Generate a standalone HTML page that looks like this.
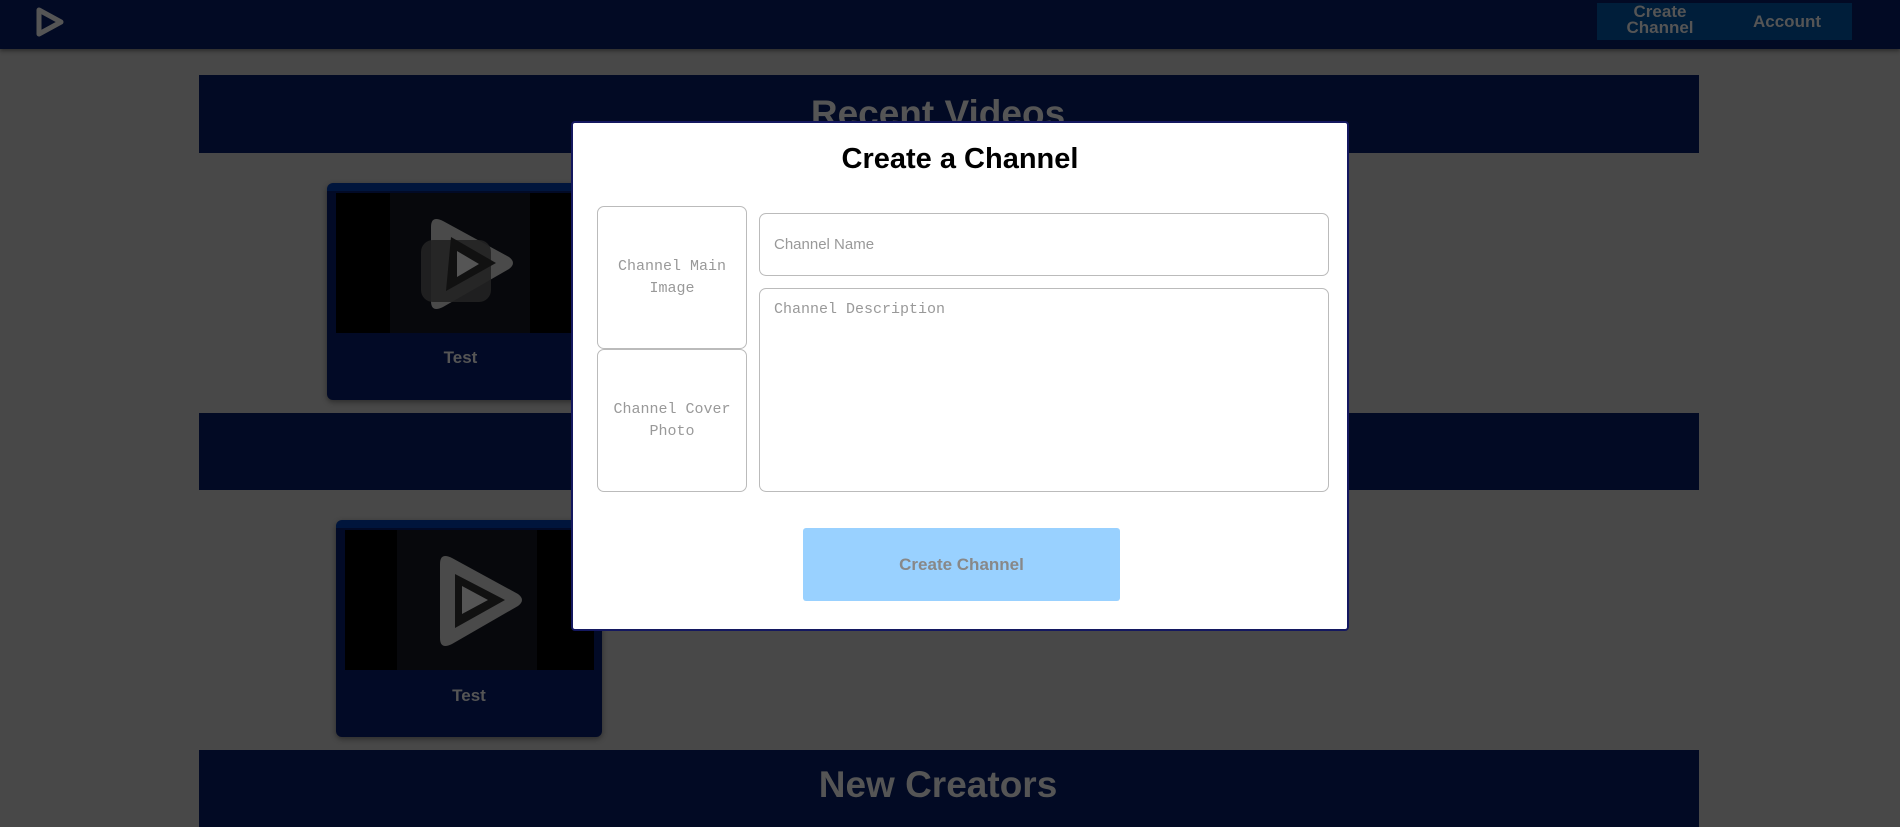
<!DOCTYPE html>
<html><head><meta charset="utf-8"><style>
*{margin:0;padding:0;box-sizing:border-box}
body{width:1900px;height:827px;overflow:hidden;background:#484848;font-family:"Liberation Sans",sans-serif;position:relative}
.abs{position:absolute}
.nav{left:0;top:0;width:1900px;height:49px;background:#020a24;box-shadow:0 2px 4px rgba(0,0,0,.4)}
.navbtn{left:1597px;top:3px;width:255px;height:37px;background:#001e3a;color:#555;font-weight:bold;font-size:17px}
.banner{left:199px;width:1500px;background:#020a24;color:#555;font-weight:bold;font-size:37px;text-align:center;padding-right:22px}
.card{background:#020a26;border-radius:6px;border-top:8px solid #00153c;box-shadow:0 2px 6px rgba(0,0,0,.4)}
.img{background:#000}
.mid{background:#07080c}
.test{color:#555;font-weight:bold;font-size:17px;text-align:center;width:100%}
.modal{left:571px;top:121px;width:778px;height:510px;background:#fff;border:2px solid #141860;border-radius:4px}
.box{border:1px solid #bbb;border-radius:7px;background:#fff;color:#999;font-family:"Liberation Mono",monospace;font-size:15px;line-height:22px;text-align:center;display:flex;align-items:center;justify-content:center}
.ph{color:#999;font-family:"Liberation Mono",monospace;font-size:15px}
</style></head><body>
<div class="abs nav"></div>
<svg class="abs" style="left:34px;top:6px" width="32" height="32" viewBox="0 0 32 32"><path d="M5 4 L27 16 L5 28 Z" fill="none" stroke="#555" stroke-width="5" stroke-linejoin="round"/></svg>
<div class="abs navbtn"><div class="abs" style="left:28px;top:1px;width:70px;text-align:center;line-height:16px">Create<br>Channel</div><div class="abs" style="left:156px;top:9px">Account</div></div>

<div class="abs banner" style="top:75px;height:78px;line-height:70px;padding-top:4px">Recent Videos</div>
<div class="abs banner" style="top:413px;height:77px"></div>
<div class="abs banner" style="top:750px;height:77px;line-height:70px">New Creators</div>

<div class="abs card" style="left:327px;top:183px;width:267px;height:217px">
 <div class="abs img" style="left:9px;top:2px;width:250px;height:140px"><div class="abs mid" style="left:54px;top:0;width:140px;height:140px"></div>
 <svg class="abs" style="left:85px;top:22px" width="100" height="100" viewBox="0 0 100 100"><path d="M10 12 Q10 0 22 6 L88 42 Q96 48 88 54 L22 92 Q10 98 10 86 Z" fill="#4a4a4a"/><rect x="0" y="25" width="70" height="62" rx="12" fill="#222" opacity=".9"/><path d="M30 22 L75 48 L25 76 Z" fill="#111"/><path d="M36 36 L58 49 L36 62 Z" fill="#555"/></svg></div>
 <div class="abs test" style="top:157px">Test</div>
</div>
<div class="abs card" style="left:336px;top:520px;width:266px;height:217px">
 <div class="abs img" style="left:9px;top:2px;width:249px;height:140px"><div class="abs mid" style="left:52px;top:0;width:140px;height:140px"></div>
 <svg class="abs" style="left:85px;top:22px" width="100" height="100" viewBox="0 0 100 100"><path d="M10 12 Q10 0 22 6 L88 42 Q96 48 88 54 L22 92 Q10 98 10 86 Z" fill="#4a4a4a"/><path d="M25 22 L75 48 L25 76 Z" fill="#111"/><path d="M32 34 L58 48 L32 62 Z" fill="#555"/></svg></div>
 <div class="abs test" style="top:158px">Test</div>
</div>

<div class="abs modal">
 <div class="abs" style="left:0;top:20px;width:100%;text-align:center;font-size:29px;font-weight:bold;color:#000">Create a Channel</div>
 <div class="abs box" style="left:24px;top:83px;width:150px;height:143px">Channel Main<br>Image</div>
 <div class="abs box" style="left:24px;top:226px;width:150px;height:143px">Channel Cover<br>Photo</div>
 <div class="abs box" style="left:186px;top:90px;width:570px;height:63px;justify-content:flex-start;padding-left:14px"><span class="ph" style="font-family:'Liberation Sans',sans-serif">Channel Name</span></div>
 <div class="abs box" style="left:186px;top:165px;width:570px;height:204px;align-items:flex-start;justify-content:flex-start;padding:10px 14px"><span class="ph">Channel Description</span></div>
 <div class="abs" style="left:230px;top:405px;width:317px;height:73px;background:#99d1ff;border-radius:3px;color:#888;font-weight:bold;font-size:17px;text-align:center;line-height:73px">Create Channel</div>
</div>
</body></html>
